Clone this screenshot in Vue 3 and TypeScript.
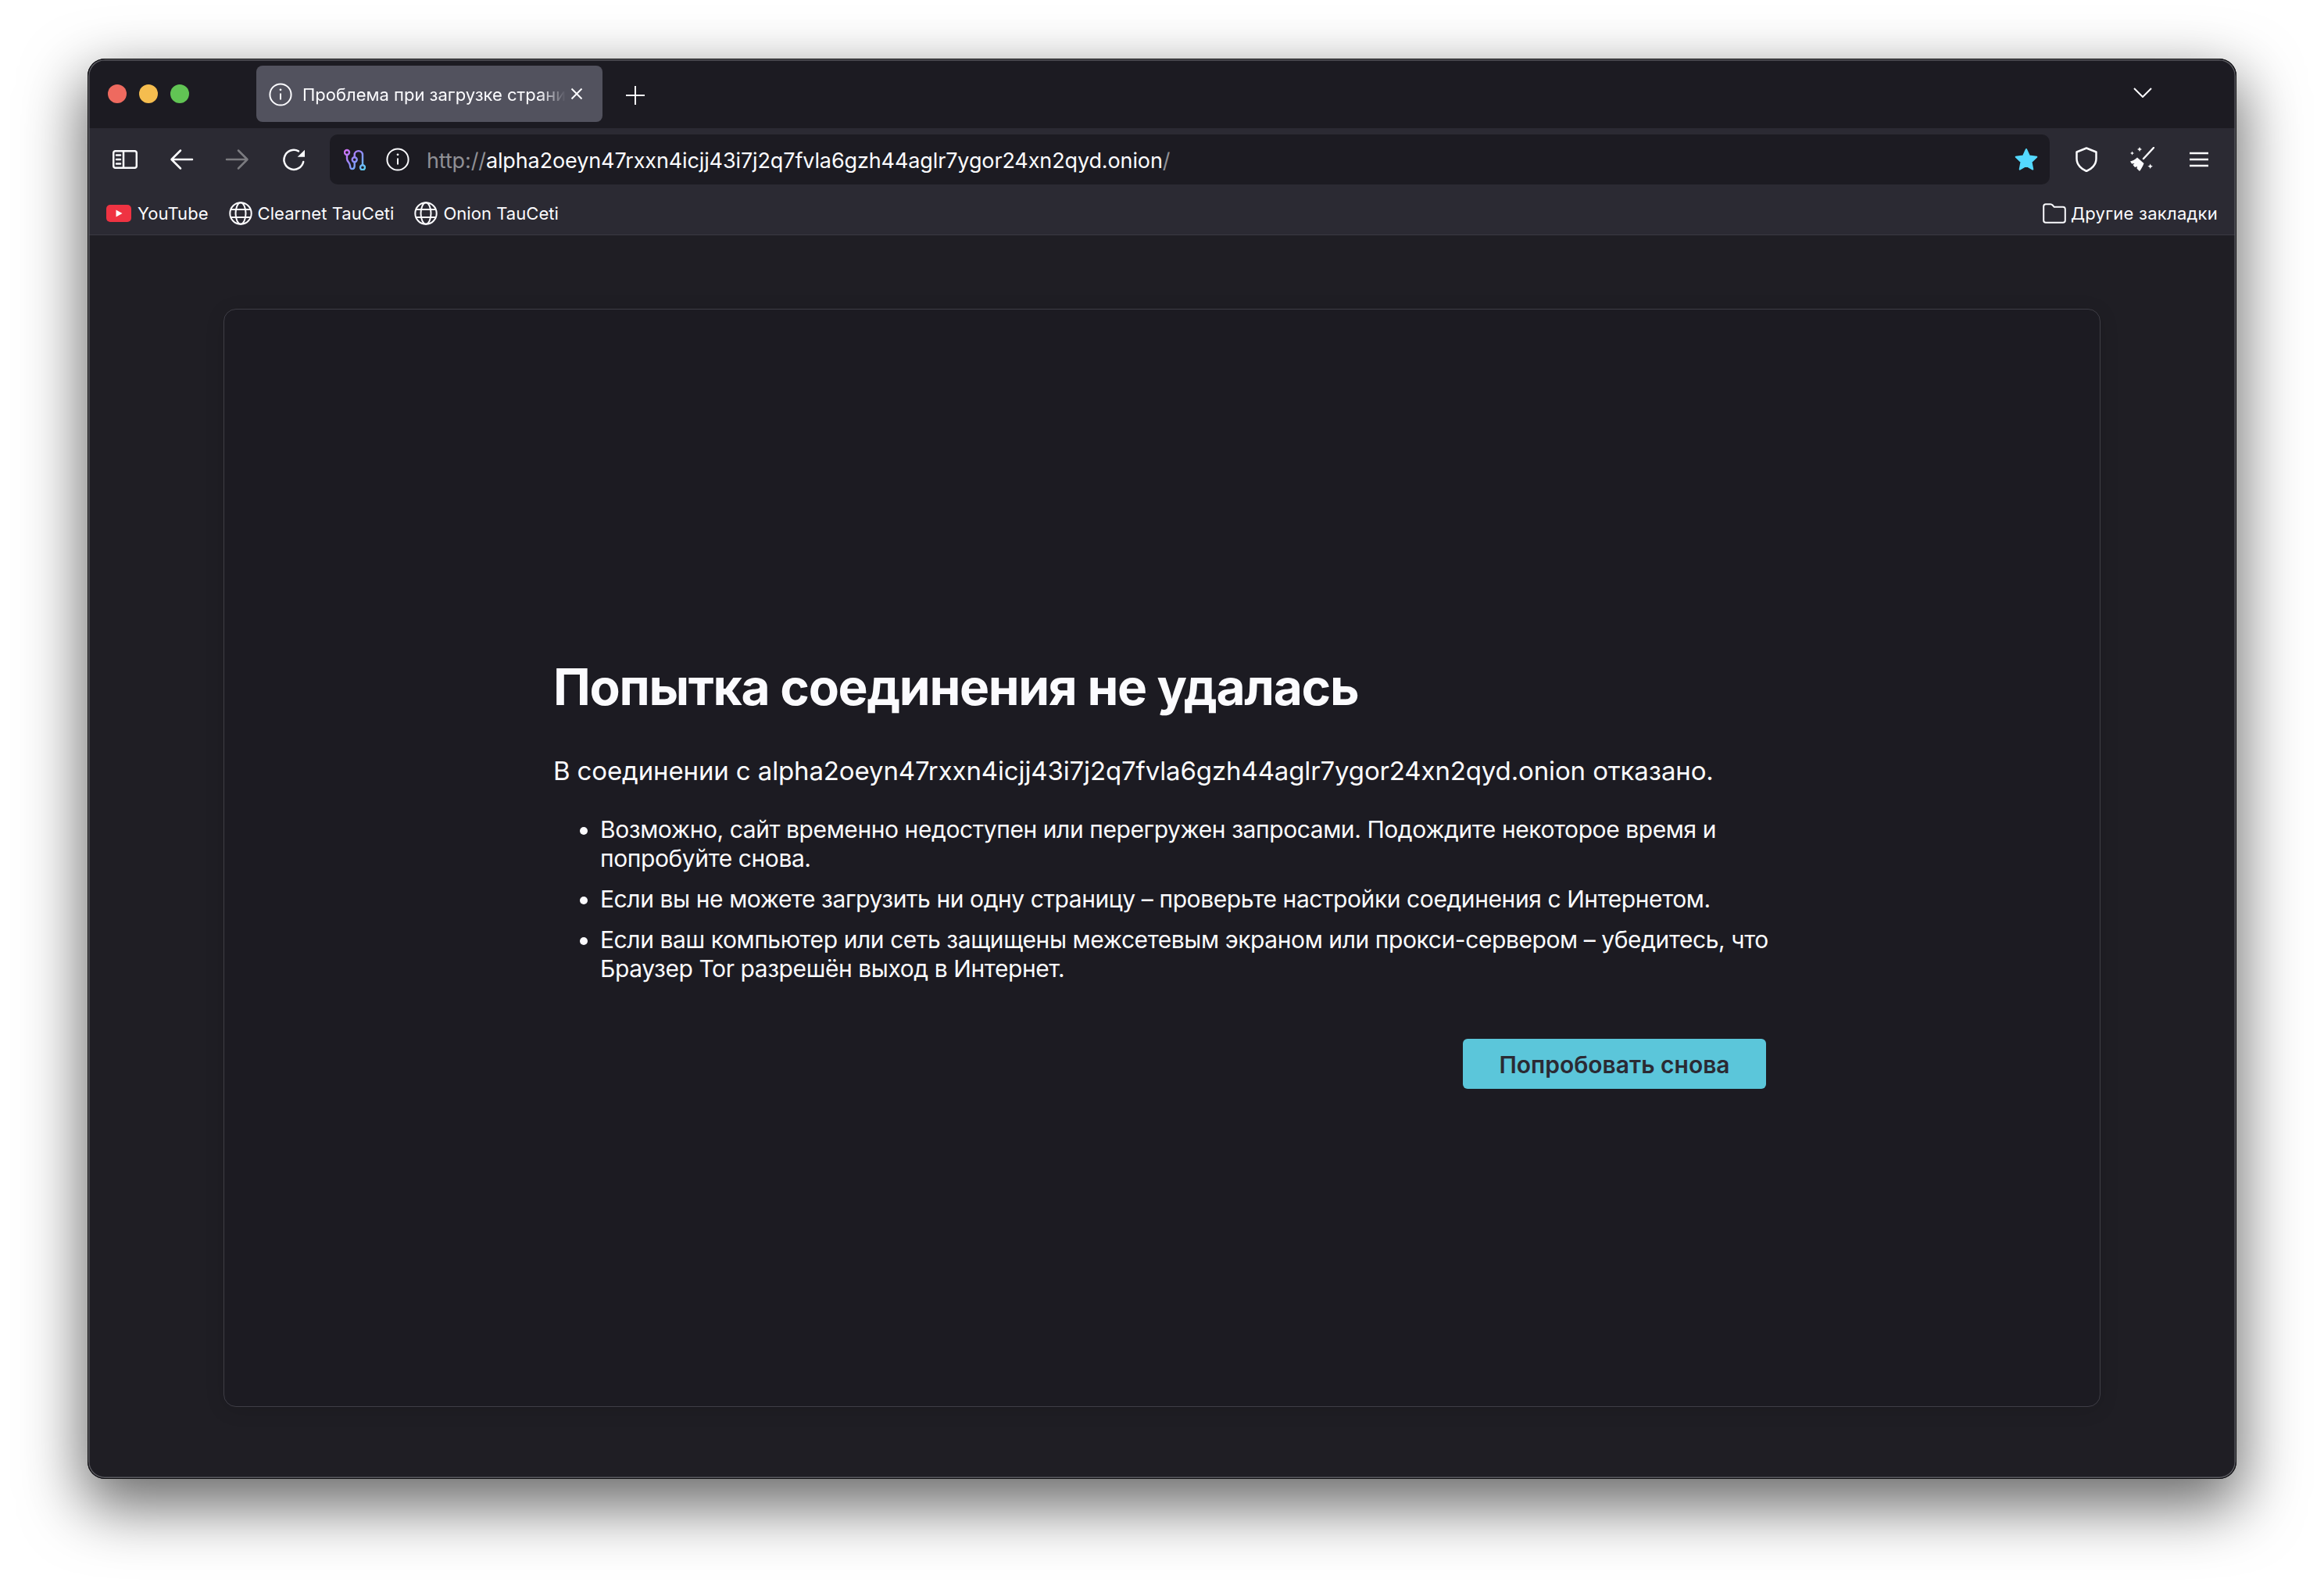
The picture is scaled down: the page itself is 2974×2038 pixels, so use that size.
<template>
  <div class="page">
    <div class="browser">
      <!-- tab strip -->
      <div class="titlebar">
        <div class="lights">
          <span class="light red"></span>
          <span class="light yellow"></span>
          <span class="light green"></span>
        </div>
        <div class="tab">
          <svg class="ico-info" viewBox="0 0 30 30"><circle cx="15" cy="15" r="13.6" /><path d="M15 13.5v8" /><circle class="dot" cx="15" cy="8.8" r="1.4" /></svg>
          <span class="tab-title">{{ tabTitle }}</span>
          <svg class="ico-close" viewBox="0 0 16 16"><path d="M1.5 1.5l13 13M14.5 1.5l-13 13" /></svg>
        </div>
        <svg class="ico-plus" viewBox="0 0 24 24"><path d="M12 0v24M0 12h24" /></svg>
        <svg class="ico-chevron" viewBox="0 0 24 13"><path d="M1 1l11 11L23 1" /></svg>
      </div>

      <!-- nav bar -->
      <div class="toolbar">
        <svg class="ico sidebar" viewBox="0 0 32 24"><rect x="1.2" y="1.2" width="29.6" height="21.6" rx="2.5" /><path d="M14 1.5v21M5 6.5h5M5 12h5M5 17.5h5" /></svg>
        <svg class="ico arrow" viewBox="0 0 32 28"><path d="M30 14H4M15 2.5L3.5 14 15 25.5" /></svg>
        <svg class="ico arrow off" viewBox="0 0 32 28"><path d="M2 14h26M17 2.5L28.5 14 17 25.5" /></svg>
        <svg class="ico reload" viewBox="0 0 32 32"><path d="M22 5.4A12.5 12.5 0 1 0 28.2 19" /><path class="solid" d="M30 3.7v9h-9.3z" /></svg>
        <div class="urlbar">
          <svg class="ico-tor" viewBox="0 0 28 28">
            <defs>
              <linearGradient id="torGrad" gradientUnits="userSpaceOnUse" x1="2" y1="2" x2="26" y2="27">
                <stop offset="0" stop-color="#d070f5" />
                <stop offset="0.5" stop-color="#8f8cf8" />
                <stop offset="1" stop-color="#5ccdf5" />
              </linearGradient>
            </defs>
            <path d="M4 8v5c0 4 4 5 4 9 0 5.500 5.700 5.500 5.700 0v-4.500M13.700 11V8c0-6.500 10.300-6.500 10.300 0v13" />
            <circle cx="4" cy="5" r="3" />
            <circle cx="13.700" cy="14.300" r="3" />
            <circle cx="24" cy="24.300" r="3" />
          </svg>
          <svg class="ico-info url-info" viewBox="0 0 30 30"><circle cx="15" cy="15" r="13.6" /><path d="M15 13.5v8" /><circle class="dot" cx="15" cy="8.8" r="1.4" /></svg>
          <div class="url"><span class="scheme">http://</span>{{ host }}<span class="scheme">/</span></div>
          <svg class="ico-star" viewBox="0 0 32 32"><path d="M16 3l4 8.600 9.300 1.200-6.800 6.500 1.800 9.300L16 24l-8.300 4.600 1.800-9.300-6.800-6.500L12 11.600z" /></svg>
        </div>
        <svg class="ico shield" viewBox="0 0 28 32"><path d="M14 1.500l12.500 5V15c0 8-6.500 13.500-12.500 16C8 28.500 1.500 23 1.500 15V6.500z" /></svg>
        <svg class="ico-broom" viewBox="0 0 32 32">
          <path class="handle" d="M31 1L18 15" />
          <path d="M10 13.500l8.500 7.500c-1.500 4-3.500 7.500-5.500 10l-3.500-3.500.5-2.500-3 1-2.500-3 2-2-3.500.5-2-3c3-.5 6.500-2.500 9-5z" />
          <path d="M13 0l1 2 2 1-2 1-1 2-1-2-2-1 2-1zM3.500 5.500l.8 1.700 1.700.8-1.700.8-.8 1.700-.8-1.700L1 8l1.700-.8zM26.700 21.500l1 2.300 2.300 1-2.300 1-1 2.300-1-2.300-2.300-1 2.300-1z" />
        </svg>
        <svg class="ico menu" viewBox="0 0 24 20"><path d="M0 2h24M0 10h24M0 18h24" /></svg>
      </div>

      <!-- bookmarks -->
      <div class="bookmarks">
        <div class="bm">
          <svg class="ico-yt" viewBox="0 0 32 22"><rect width="32" height="22" rx="5" /><path d="M12.500 6.500l8 4.500-8 4.500z" /></svg>
          <span>YouTube</span>
        </div>
        <div v-for="b in globeMarks" :key="b" class="bm">
          <svg class="ico-globe" viewBox="0 0 30 30"><circle cx="15" cy="15" r="13.700" /><ellipse cx="15" cy="15" rx="6.500" ry="13.700" /><path d="M2.500 10h25M2.500 20h25" /></svg>
          <span>{{ b }}</span>
        </div>
        <div class="bm other">
          <svg class="ico-folder" viewBox="0 0 30 26"><path d="M1.200 4c0-1.500 1-2.800 2.800-2.800h6c1.200 0 2 .5 2.700 1.300l2 2.300H26c1.700 0 2.800 1.100 2.800 2.800V22c0 1.700-1.100 2.800-2.800 2.800H4c-1.800 0-2.800-1.100-2.800-2.800z" /></svg>
          <span>Другие закладки</span>
        </div>
      </div>

      <!-- error page -->
      <main class="content">
        <section class="card">
          <div class="message">
            <h1>Попытка соединения не удалась</h1>
            <p class="lead">В соединении с {{ host }} отказано.</p>
            <ul>
              <li v-for="tip in tips" :key="tip">{{ tip }}</li>
            </ul>
            <div class="actions">
              <button class="retry">Попробовать снова</button>
            </div>
          </div>
        </section>
      </main>
    </div>
  </div>
</template>

<script setup lang="ts">
const tabTitle = 'Проблема при загрузке страницы'
const host = 'alpha2oeyn47rxxn4icjj43i7j2q7fvla6gzh44aglr7ygor24xn2qyd.onion'
const globeMarks: string[] = ['Clearnet TauCeti', 'Onion TauCeti']
const tips: string[] = [
  'Возможно, сайт временно недоступен или перегружен запросами. Подождите некоторое время и попробуйте снова.',
  'Если вы не можете загрузить ни одну страницу – проверьте настройки соединения с Интернетом.',
  'Если ваш компьютер или сеть защищены межсетевым экраном или прокси-сервером – убедитесь, что Браузер Tor разрешён выход в Интернет.'
]
</script>

<style scoped>
.page {
  width: 2974px;
  height: 2038px;
  padding: 75px 112px 146px;
  box-sizing: border-box;
  font-family: Inter, "Noto Sans", sans-serif;
  color: #fbfbfe;
}

.browser {
  position: relative;
  height: 100%;
  display: flex;
  flex-direction: column;
  border-radius: 22px;
  overflow: hidden;
  background: #1c1b22;
  box-shadow: 0 30px 78px 6px rgba(0, 0, 0, 0.58);
}

/* hairline round the window, sits over the bars */
.browser::after {
  content: "";
  position: absolute;
  inset: 0;
  border-radius: 22px;
  border: 1px solid #0c0c0e;
  box-shadow: inset 0 0 0 1.5px #5c5c62;
  pointer-events: none;
}

.titlebar {
  height: 89px;
  flex-shrink: 0;
  display: flex;
  align-items: center;
  padding: 0 108px 0 26px;
  box-sizing: border-box;
  background: #1c1b22;
}

.lights {
  display: flex;
  gap: 16px;
}

.light {
  width: 24px;
  height: 24px;
  border-radius: 50%;
}

.red { background: #ee6a5f; }
.yellow { background: #f5bd4f; }
.green { background: #61c454; }

.tab {
  width: 443px;
  height: 72px;
  margin: 1px 0 0 86px;
  display: flex;
  align-items: center;
  padding: 2px 25px 0 16px;
  box-sizing: border-box;
  border-radius: 8px;
  background: #52525e;
}

.ico-info {
  width: 30px;
  height: 30px;
  flex-shrink: 0;
  fill: none;
  stroke: #fbfbfe;
  stroke-width: 2;
}

.ico-info .dot {
  fill: #fbfbfe;
  stroke: none;
}

.tab-title {
  flex: 1;
  margin-left: 13px;
  font-size: 22px;
  white-space: nowrap;
  overflow: hidden;
  -webkit-mask-image: linear-gradient(to right, #000 90%, transparent);
  mask-image: linear-gradient(to right, #000 90%, transparent);
}

.ico-close {
  width: 16px;
  height: 16px;
  margin: -2px 0 0 6px;
  fill: none;
  stroke: #fbfbfe;
  stroke-width: 2;
}

.ico-plus {
  width: 24px;
  height: 24px;
  margin: 4px 0 0 30px;
  fill: none;
  stroke: #fbfbfe;
  stroke-width: 2;
}

.ico-chevron {
  width: 24px;
  height: 13px;
  margin-left: auto;
  margin-top: -2px;
  fill: none;
  stroke: #fbfbfe;
  stroke-width: 2;
}

.toolbar {
  height: 80px;
  flex-shrink: 0;
  display: flex;
  align-items: center;
  padding: 0 36px 0 32px;
  box-sizing: border-box;
  background: #2b2a33;
}

.ico {
  flex-shrink: 0;
  fill: none;
  stroke: #fbfbfe;
  stroke-width: 2.500;
  stroke-linecap: round;
  stroke-linejoin: round;
}

.sidebar {
  width: 32px;
  height: 24px;
}

.arrow {
  width: 32px;
  height: 28px;
  margin-left: 40px;
}

.arrow.off {
  stroke: #7b7b80;
}

.reload {
  width: 32px;
  height: 32px;
  margin-left: 40px;
}

.reload .solid {
  fill: #fbfbfe;
  stroke: none;
}

.urlbar {
  flex: 1;
  height: 64px;
  margin-left: 30px;
  display: flex;
  align-items: center;
  padding: 0 14px 0 18px;
  box-sizing: border-box;
  border-radius: 10px;
  background: #1c1b22;
}

.ico-tor {
  width: 28px;
  height: 28px;
  flex-shrink: 0;
  fill: none;
  stroke: url(#torGrad);
  stroke-width: 2.400;
}

.url-info {
  margin-left: 26px;
}

.url {
  flex: 1;
  margin: 2px 0 0 22px;
  font-size: 27px;
  letter-spacing: -0.12px;
  white-space: nowrap;
}

.scheme {
  color: #8f8f94;
}

.ico-star {
  width: 32px;
  height: 32px;
  fill: #54d9ff;
  stroke: #54d9ff;
  stroke-width: 2;
  stroke-linejoin: round;
}

.shield {
  width: 28px;
  height: 32px;
  margin-left: 33px;
}

.ico-broom {
  width: 32px;
  height: 32px;
  flex-shrink: 0;
  margin-left: 41px;
  fill: #fbfbfe;
}

.ico-broom .handle {
  fill: none;
  stroke: #fbfbfe;
  stroke-width: 2.500;
  stroke-linecap: round;
}

.menu {
  width: 24px;
  height: 20px;
  margin-left: 45px;
}

.bookmarks {
  height: 57px;
  flex-shrink: 0;
  display: flex;
  align-items: center;
  gap: 26px;
  padding: 2px 24px 0;
  box-sizing: border-box;
  border-bottom: 1px solid #3a3942;
  background: #2b2a33;
  font-size: 22px;
  letter-spacing: 0.05px;
}

.bm {
  display: flex;
  align-items: center;
}

.ico-yt {
  width: 32px;
  height: 22px;
  margin-right: 8px;
}

.ico-yt rect { fill: #ef3342; }
.ico-yt path { fill: #fff; }

.ico-globe {
  width: 30px;
  height: 30px;
  margin-right: 7px;
  fill: none;
  stroke: #fbfbfe;
  stroke-width: 2;
}

.other {
  margin-left: auto;
  letter-spacing: 0.25px;
}

.ico-folder {
  width: 30px;
  height: 26px;
  margin-right: 6px;
  fill: none;
  stroke: #fbfbfe;
  stroke-width: 2;
}

.content {
  flex: 1;
  display: flex;
  padding: 94px 174px 92px;
  background: #1f1e24;
}

.card {
  flex: 1;
  display: flex;
  padding: 444px 0 0 421px;
  border: 1px solid #3f3e46;
  border-radius: 16px;
  background: #1c1b22;
  box-shadow: 0 4px 24px rgba(0, 0, 0, 0.12);
}

.message {
  width: 1552px;
}

h1 {
  margin: 0;
  font-size: 64px;
  line-height: 78px;
  font-weight: 700;
  letter-spacing: -1.3px;
}

.lead {
  margin: 47px 0 0;
  font-size: 33px;
  line-height: 42px;
  letter-spacing: -0.13px;
}

ul {
  margin: 36px -12px 0 0;
  padding: 0 0 0 60px;
  font-size: 30px;
  line-height: 37px;
  letter-spacing: -0.42px;
}

li + li {
  margin-top: 15px;
}

.actions {
  display: flex;
  justify-content: flex-end;
  margin-top: 71px;
}

.retry {
  width: 388px;
  height: 64px;
  padding: 2px 0 0;
  border: none;
  border-radius: 6px;
  background: #5bc6da;
  color: #2b2a33;
  font-family: inherit;
  font-size: 30px;
  font-weight: 600;
}
</style>

<style>
html,
body {
  background: #fff;
}
</style>
